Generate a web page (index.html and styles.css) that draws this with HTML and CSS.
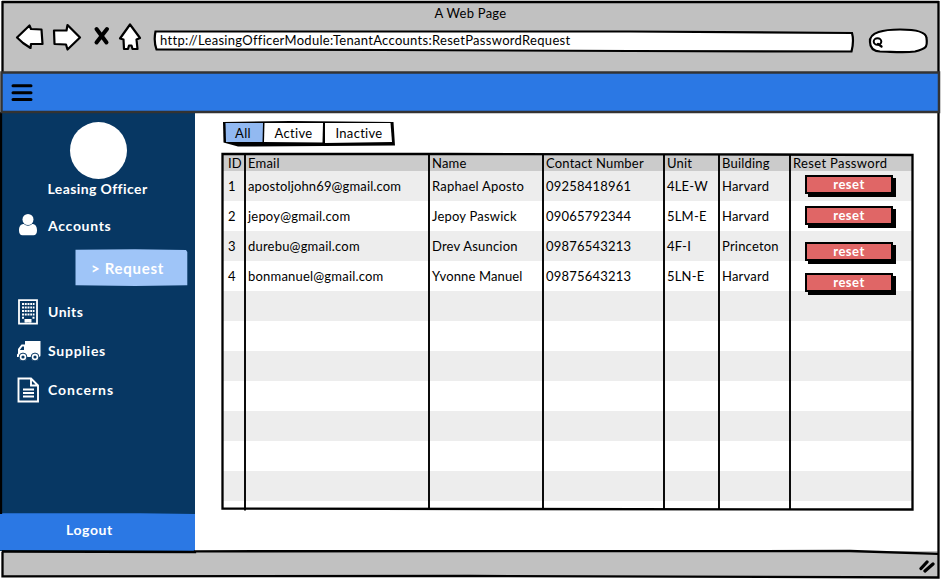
FILE: index.html
```html
<!DOCTYPE html>
<html lang="en">
<head>
<meta charset="utf-8">
<title>A Web Page</title>
<link rel="stylesheet" href="styles.css">
</head>
<body>
<div class="window">
  <header class="chrome">
    <div class="title">A Web Page</div>
    <div class="toolbar">
      <svg class="nav-icons" width="132" height="36" viewBox="12 20 132 36">
        <g fill="#fff" stroke="#000" stroke-width="2.2" stroke-linejoin="round">
          <path d="M17 37.5 29.5 25.500 31 29 41.500 29.500 42.500 44 31 44 30.500 48 23 43Z"/>
          <path d="M54 30.500 66.500 30.500 67.500 25 80 37.500 67.500 49.500 66 44.500 54.500 44Z"/>
          <path d="M130 24.500 140 38 136.500 39.500 137.500 49 132.500 49 131.500 45.500 129 45.500 128 49 124 49 123.500 39.500 120 38.500Z"/>
        </g>
        <path d="M96.500 29 106.500 42.500M107 29 96.500 42.500" fill="none" stroke="#000" stroke-width="4" stroke-linecap="round"/>
      </svg>
      <div class="address">
        <svg class="field-frame" width="702" height="24" viewBox="153 29 702 24">
          <path d="M155.500 31.500 400 31.500 630 31.500 852 33Q854.200 41 851.500 51.500L630 51 380 50 156.500 49.500Q153.500 41 155.500 31.500Z" fill="#fff" stroke="#000" stroke-width="2.200"/>
        </svg>
        <span class="url">http://LeasingOfficerModule:TenantAccounts:ResetPasswordRequest</span>
      </div>
      <svg class="search" width="62" height="26" viewBox="867 28 62 26">
        <path d="M870 42C869 32 884 29.500 900 29.500 916 29.500 926 31.500 926.500 38 928 48 925 49 915 51.500 903 53 890 51.500 880 51.500 873 51 870 47 870 42Z" fill="#fff" stroke="#000" stroke-width="2.200"/>
        <ellipse cx="877.500" cy="41.500" rx="3.800" ry="3.300" fill="none" stroke="#000" stroke-width="2"/>
        <path d="M878 44 881.500 46.500" stroke="#000" stroke-width="2.300" stroke-linecap="round"/>
      </svg>
    </div>
  </header>

  <div class="appbar">
    <svg width="22" height="18" viewBox="0 0 22 18"><path d="M2 1.700H20M2 8.700H20M2 15.500H20" stroke="#000" stroke-width="3" stroke-linecap="round"/></svg>
  </div>

  <div class="body">
    <aside class="sidebar">
      <div class="avatar"></div>
      <div class="role">Leasing Officer</div>
      <nav class="menu">
        <a class="item">
          <svg width="24" height="24" viewBox="0 0 24 24" fill="#fff"><circle cx="12" cy="6.500" r="5.500"/><path d="M8 11C5 11 3 13 3 17.500 3 20.500 4.300 22.300 6.500 22.300H17.500C19.700 22.300 21 20.500 21 17.500 21 13 19 11 16 11 14 13.200 10 13.200 8 11Z"/></svg>
          <span class="t-accounts">Accounts</span>
        </a>
        <a class="subitem">
          <svg class="sub-shape" width="113" height="38" viewBox="0 0 113 38"><path d="M.5 .8 60 .3 111 1 112.300 3V36.300L60 37 .5 36.300Z" fill="#9fc5f8"/></svg>
          <span>&gt; Request</span>
        </a>
        <a class="item">
          <svg width="24" height="26" viewBox="0 0 24 26"><path d="M3 1.200H21V24.600H3Z" fill="none" stroke="#fff" stroke-width="1.800"/><path d="M6 5H18.500M6 8.500H18.500M6 12H18.500M6 15.500H18.500" fill="none" stroke="#fff" stroke-width="2" stroke-dasharray="2 .75"/><path d="M6 18.800H8M16.500 18.800H18.500M9.500 23.500V21H14.500V23.500" stroke="#fff" stroke-width="2" fill="#fff"/></svg>
          <span class="t-units">Units</span>
        </a>
        <a class="item">
          <svg width="25" height="22" viewBox="0 0 25 22" fill="#fff"><path d="M9 1H24.500V15.500Q24.500 17 22.500 17H1V14.500L2 13.500V9L5.500 4.500H9ZM3.800 10H8V6.500H6.300Z" fill-rule="evenodd"/><circle cx="7" cy="17" r="3.900" stroke="#073763" stroke-width="1"/><circle cx="19" cy="17" r="3.900" stroke="#073763" stroke-width="1"/><circle cx="7" cy="17" r="1.600" fill="#073763"/><circle cx="19" cy="17" r="1.600" fill="#073763"/></svg>
          <span class="t-supplies">Supplies</span>
        </a>
        <a class="item">
          <svg width="24" height="26" viewBox="0 0 24 26" fill="none" stroke="#fff" stroke-width="1.900"><path d="M2.500 1.500H15L22 8.500V24.500H2.500ZM15 1.500V8.500H22M7 12.500H18M7 16H18M7 19.500H18"/></svg>
          <span class="t-concerns">Concerns</span>
        </a>
      </nav>
      <a class="logout">
        <svg class="logout-shape" width="195" height="38" viewBox="0 0 195 38"><path d="M0 .3H140L195 1V38L100 37.500 0 37Z" fill="#2b78e4"/></svg>
        <span>Logout</span>
      </a>
    </aside>

    <main class="content">
      <div class="tabs">
        <svg class="tabs-frame" width="174" height="28" viewBox="222 120 174 28">
          <path d="M223 122 290 121 393.500 122 395 145.500 238 146.500 223.500 142.500Z"/>
          <path d="M225.500 123 263 123 262.500 142 226 142Z" fill="#92b9f1"/>
          <path d="M264.500 123 323 123 322.500 142.500 264 142Z" fill="#fff"/>
          <path d="M325 123 390.500 123 392 142 325 143Z" fill="#fff"/>
        </svg>
        <span class="tab tab-all">All</span><span class="tab tab-active">Active</span><span class="tab tab-inactive">Inactive</span>
      </div>

      <div class="table">
        <div class="row head"><span>ID</span><span>Email</span><span>Name</span><span class="contact">Contact Number</span><span>Unit</span><span>Building</span><span class="rp">Reset Password</span></div>
        <div class="row"><span>1</span><span class="tight">apostoljohn69@gmail.com</span><span>Raphael Aposto</span><span>09258418961</span><span>4LE-W</span><span>Harvard</span><button class="reset r1">reset</button></div>
        <div class="row"><span>2</span><span>jepoy@gmail.com</span><span>Jepoy Paswick</span><span>09065792344</span><span>5LM-E</span><span>Harvard</span><button class="reset r2">reset</button></div>
        <div class="row"><span>3</span><span>durebu@gmail.com</span><span>Drev Asuncion</span><span>09876543213</span><span>4F-I</span><span>Princeton</span><button class="reset r3">reset</button></div>
        <div class="row"><span>4</span><span>bonmanuel@gmail.com</span><span class="tight">Yvonne Manuel</span><span>09875643213</span><span>5LN-E</span><span>Harvard</span><button class="reset r4">reset</button></div>
        <div class="row"></div><div class="row"></div><div class="row"></div><div class="row"></div><div class="row"></div><div class="row"></div><div class="row"></div>
        <svg class="rules" width="695" height="360" viewBox="220 152 695 360" fill="none" stroke="#000">
          <path d="M222.500 154 450 154 700 154.300 912.500 155 912.500 509.500 500 509 222.500 508.500Z" stroke-width="2.300"/>
          <path d="M245 154V510.500M429 154V509M543 154V510M664 154V510M719 154V510M790 154V510" stroke-width="1.900"/>
        </svg>
      </div>
    </main>
  </div>

  <footer class="status">
    <svg width="18" height="14" viewBox="918 559 18 14"><path d="M921 568.500 927 562M925 571 933 564" stroke="#000" stroke-width="3.300" stroke-linecap="round"/></svg>
  </footer>

  <svg class="outline" width="941" height="579" viewBox="0 0 941 579" fill="none">
    <path d="M2.500 72V2.200H938.500V72M938.500 112V577.500L470 576 2.500 576.300V551.500M1 112V514" stroke="#000" stroke-width="2.300"/>
    <path d="M2 551.500 195 552 195 551.300 850 551 938 553.800" stroke="#000" stroke-width="2.300"/>
    <path d="M1.500 72.500H939V112H1.500Z" stroke="#333" stroke-width="2.500"/>
  </svg>
</div>
</body>
</html>
```
FILE: styles.css
```css
* { box-sizing: border-box; }
body { margin: 0; font-family: Lato, "Liberation Sans", sans-serif; font-size: 13px; color: #000; background: #fff; }
.window { position: relative; display: flex; flex-direction: column; width: 941px; height: 579px; overflow: hidden; background: #fff; }
.outline { position: absolute; inset: 0; pointer-events: none; }
svg { flex: none; }

.chrome { height: 72px; margin: 0 2px; padding-top: 6px; background: #c1c1c1; }
.title { height: 14px; line-height: 15px; text-align: center; letter-spacing: .25px; }
.toolbar { display: flex; height: 36px; padding-left: 10px; }
.address { position: relative; margin: 9px 12px 0 9px; width: 702px; height: 24px; padding-left: 7px; line-height: 23px; }
.field-frame { position: absolute; left: 0; top: 0; }
.url { position: relative; letter-spacing: .3px; }
.search { margin-top: 8px; }

.appbar { display: flex; align-items: center; height: 40px; margin: 0 2px; padding: 1px 0 0 9px; background: #2b78e4; }

.body { display: flex; height: 439px; }
.sidebar { display: flex; flex-direction: column; width: 195px; background: #073763; color: #fff; font-weight: 700; font-size: 14px; }
.avatar { width: 57px; height: 57px; margin: 10px 0 0 70px; border-radius: 50%; background: #fff; }
.role { height: 20px; line-height: 20px; text-align: center; letter-spacing: .4px; }
.menu { display: flex; flex-direction: column; }
.item { display: flex; align-items: center; gap: 8px; height: 39px; padding-left: 16px; }
.item:nth-child(4) { gap: 7px; }
.item:first-child { margin-top: 7px; height: 38px; }
.t-accounts { letter-spacing: .7px; }
.t-units { letter-spacing: .5px; }
.t-supplies { letter-spacing: .75px; }
.t-concerns { letter-spacing: .95px; }
.subitem { position: relative; width: 113px; height: 38px; margin: 5px 0 5px 75px; padding-left: 16px; line-height: 38px; font-size: 15px; letter-spacing: .7px; }
.subitem span { position: relative; }
.sub-shape { position: absolute; left: 0; top: 0; }
.logout { position: relative; height: 38px; margin-top: auto; padding-left: 66px; line-height: 33px; letter-spacing: .6px; }
.logout span { position: relative; }
.logout-shape { position: absolute; left: 0; top: 0; }

.content { padding: 8px 0 0 25px; }
.tabs { position: relative; display: flex; width: 174px; height: 28px; margin-left: 2px; line-height: 27px; }
.tabs-frame { position: absolute; left: 0; top: 0; }
.tab { position: relative; text-align: center; letter-spacing: .3px; }
.tab-all { width: 42px; }
.tab-active { width: 59px; }
.tab-inactive { width: 72px; }

.table { position: relative; width: 695px; height: 360px; margin-top: 4px; padding: 3px 2px 0 3px; }
.row { display: grid; grid-template-columns: 22px 184px 114px 121px 55px 71px 122px; height: 30px; line-height: 31px; white-space: nowrap; }
.row:nth-child(even) { background: #ededed; }
.row > span { padding-left: 3px; letter-spacing: .2px; }
.row > span:first-child { padding-left: 5px; }
.row > .tight { letter-spacing: .13px; }
.row > .rp { letter-spacing: .35px; }
.row.head { height: 16px; line-height: 17px; background: #cbcbcb; }
.rules { position: absolute; left: 0; top: 0; }
.reset { align-self: start; width: 88px; height: 19px; margin-left: 15px; padding: 0; border: 2px solid #000; background: #e06666; box-shadow: 3px 3px 0 #000; color: #fff; font: 700 13px/15px Lato, "Liberation Sans", sans-serif; letter-spacing: .5px; }
.r1 { margin-top: 4px; }
.r2 { margin-top: 5px; }
.r3 { margin-top: 11px; }
.r4 { margin-top: 12px; }

.status { display: flex; justify-content: flex-end; height: 26px; margin: 0 2px; padding: 8px 3px 0 0; background: #c1c1c1; }
```
